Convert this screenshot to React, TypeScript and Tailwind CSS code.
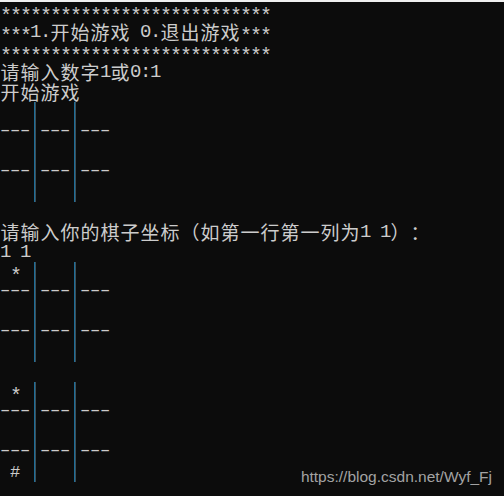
const STARS = '***************************';

const lines: string[] = [
  STARS,
  '***1.开始游戏 0.退出游戏***',
  STARS,
  '请输入数字1或0:1',
  '开始游戏',
  '   |   |   ',
  '---|---|---',
  '   |   |   ',
  '---|---|---',
  '   |   |   ',
  '',
  '请输入你的棋子坐标（如第一行第一列为1 1）：',
  '1 1',
  ' * |   |   ',
  '---|---|---',
  '   |   |   ',
  '---|---|---',
  '   |   |   ',
  '',
  ' * |   |   ',
  '---|---|---',
  '   |   |   ',
  '---|---|---',
  ' # |   |   ',
];

// full-width glyphs take two console cells
const isWide = (c: string) => c.charCodeAt(0) > 0x2e80;

function Cell({ ch }: { ch: string }) {
  if (ch === '|') {
    return (
      <span className="flex h-5 w-2.5 shrink-0 justify-center">
        <span className="w-px bg-[#1d6f9a]" />
        <span className="w-px bg-[#3d4f58]" />
      </span>
    );
  }
  if (ch === '-') {
    return (
      <span className="block h-5 w-2.5 shrink-0 -translate-y-px scale-x-[1.6] text-center font-['Liberation_Mono',monospace] text-[17px] leading-5 tracking-[-0.2px]">
        -
      </span>
    );
  }
  if (ch === '*') {
    return (
      <span className="block h-5 w-2.5 shrink-0 translate-y-[5px] text-center font-['Liberation_Mono',monospace] text-[20px] leading-5 tracking-[-2px]">
        *
      </span>
    );
  }
  if (ch === '#') {
    return (
      <span className="block h-5 w-2.5 shrink-0 translate-y-[1px] text-center font-['Liberation_Mono',monospace] text-[17px] leading-5 tracking-[-0.2px]">
        #
      </span>
    );
  }
  if (isWide(ch)) {
    return (
      <span className="block h-5 w-5 shrink-0 text-center font-['Noto_Sans_CJK_SC',sans-serif] text-[19px] leading-5">
        {ch}
      </span>
    );
  }
  return (
    <span className="block h-5 w-2.5 shrink-0 whitespace-pre text-center font-['Liberation_Mono',monospace] text-[19px] leading-5 tracking-[-1.4px]">
      {ch}
    </span>
  );
}

function ConsoleLine({ text }: { text: string }) {
  return (
    <div className="flex h-5">
      {[...text].map((ch, i) => (
        <Cell key={i} ch={ch} />
      ))}
    </div>
  );
}

export default function App() {
  return (
    <div className="relative h-[496px] w-[504px] overflow-hidden border-t-2 border-[#f0f0f0] bg-[#0c0c0c] text-[#cccccc]">
      <div className="flex flex-col">
        {lines.map((l, i) => (
          <ConsoleLine key={i} text={l} />
        ))}
      </div>
      {/* csdn watermark */}
      <div className="absolute right-[12px] top-[467px] font-['Liberation_Sans',Arial,sans-serif] text-[15.5px] leading-none text-[#a3a3a3]">
        https://blog.csdn.net/Wyf_Fj
      </div>
    </div>
  );
}
